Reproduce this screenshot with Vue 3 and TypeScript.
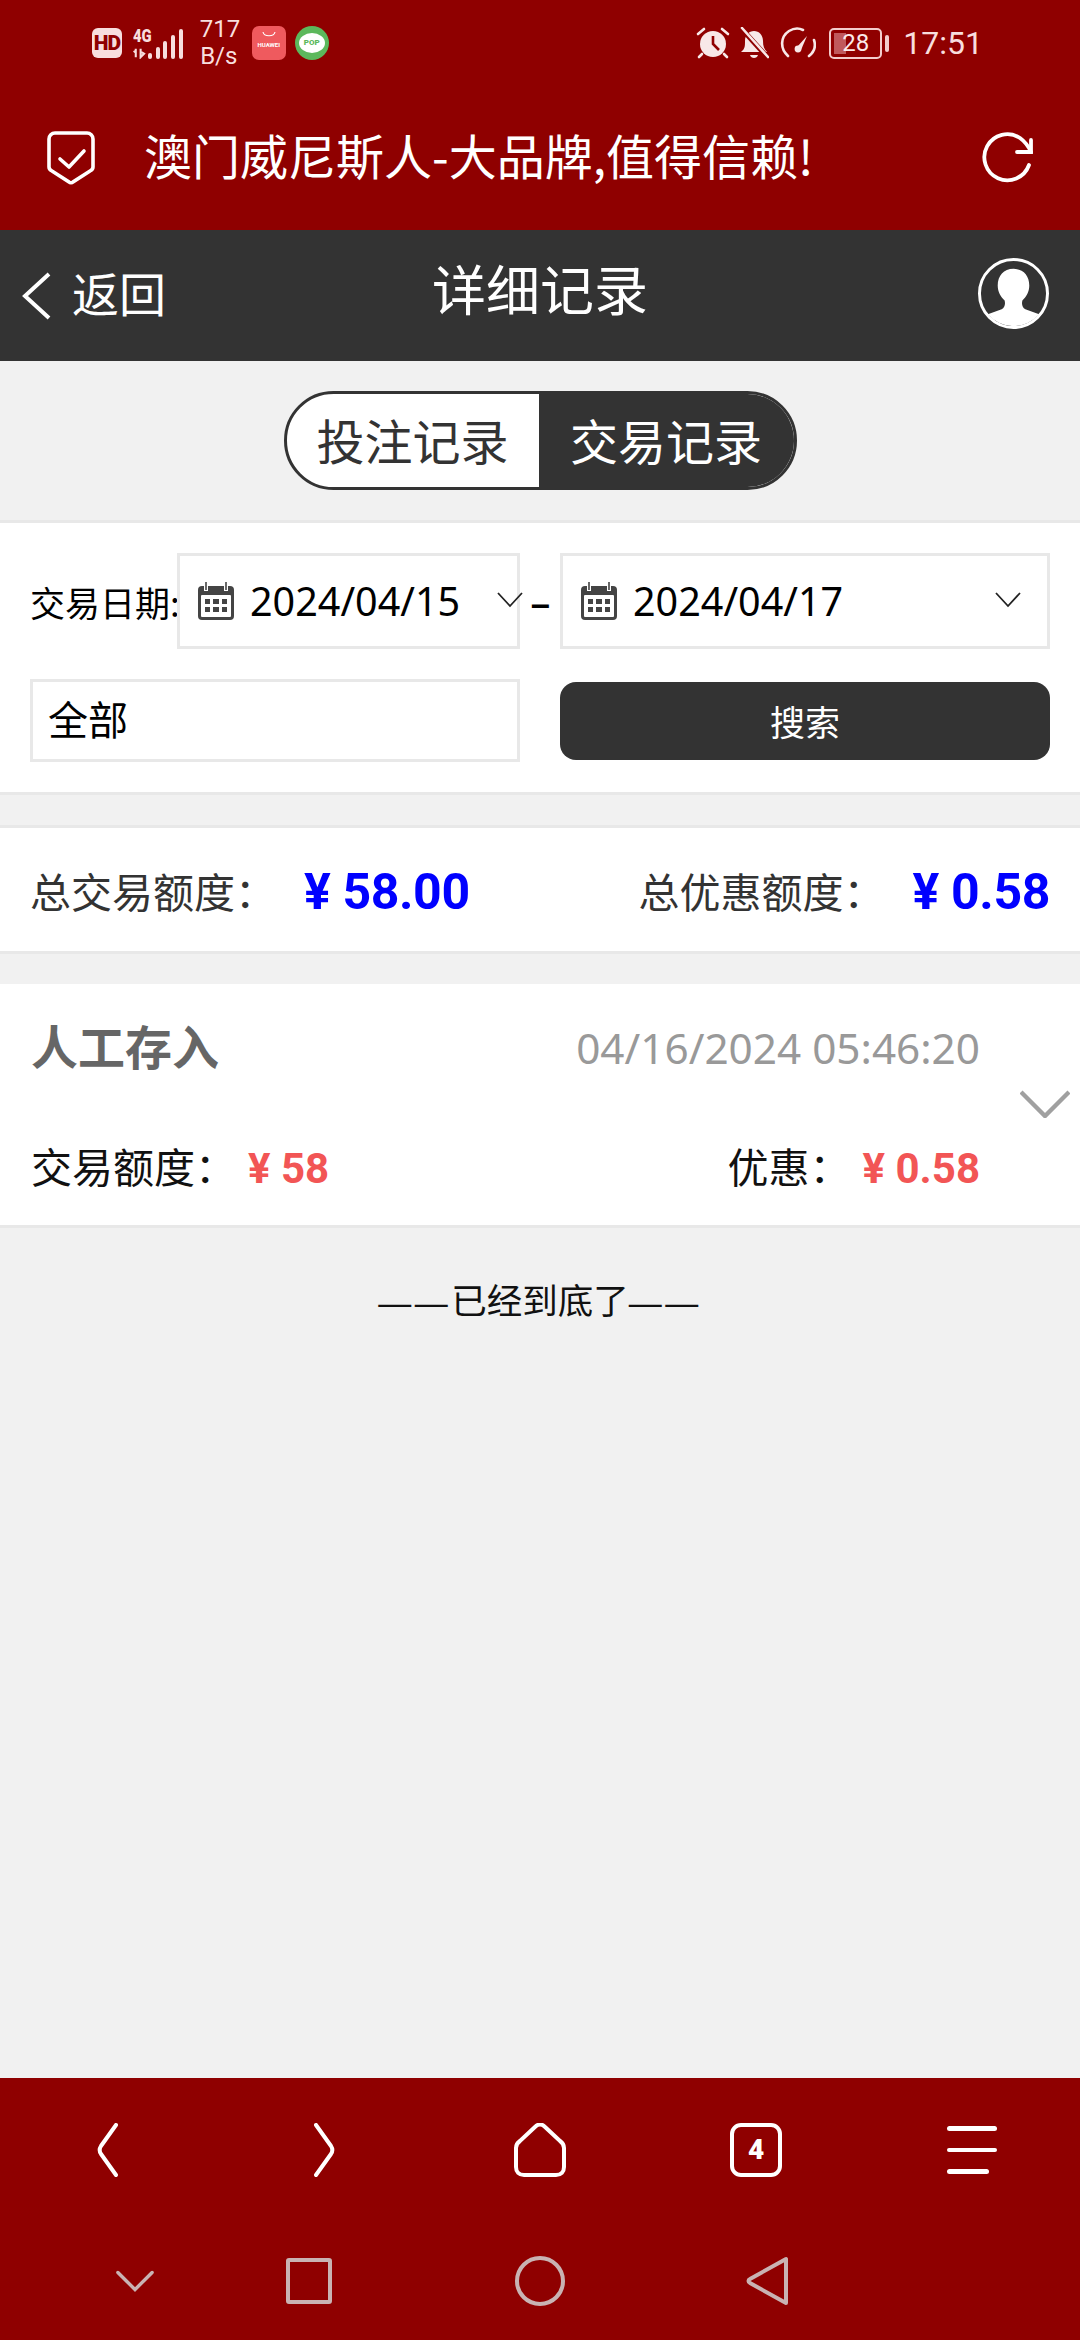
<template>
  <div class="page">
    <div class="top-red">
      <div class="status">
        <div class="status-left">
          <span class="hd">HD</span>
          <div class="net">
            <div class="net-text">
              <span>4G</span>
              <svg width="18" height="12" viewBox="0 0 26 14"><path d="M3 4 1 6M4 1v12M11 1v12l5-5-5-3" fill="none" stroke="#f8dede" stroke-width="3" /></svg>
            </div>
            <div class="bars">
              <i v-for="h in signal" :key="h" class="bar" :style="{ height: h + 'px' }" />
            </div>
          </div>
          <div class="speed">717<br />B/s</div>
          <div class="app-huawei">
            <svg width="14" height="7" viewBox="0 0 14 7"><path d="M1 1c1 5 11 5 12 0" fill="none" stroke="#fff" stroke-width="1.2" /></svg>
            <span>HUAWEI</span>
          </div>
          <div class="app-pop"><span>POP</span></div>
        </div>
        <div class="status-right">
          <svg width="34" height="32" viewBox="0 0 34 32">
            <circle cx="17" cy="17" r="13" fill="#f8e8e8" />
            <path d="M17 9v8l6 6" fill="none" stroke="#8f0000" stroke-width="2.6" />
            <path d="M2 7l6-5M32 7l-6-5M6 27l-3 3M28 27l3 3" stroke="#f8e8e8" stroke-width="2.6" stroke-linecap="round" />
          </svg>
          <svg class="bell" width="30" height="32" viewBox="0 0 30 32">
            <path d="M2 25c4-3 4-6 4-11 0-6 4-10 9-10s9 4 9 10c0 5 1 8 4 11z" fill="#f8e8e8" />
            <path d="M11 28h8c-1 4-7 4-8 0z" fill="#f8e8e8" />
            <path d="M2 1l27 30" stroke="#8f0000" stroke-width="5" />
            <path d="M3 1l26 29" stroke="#f8e8e8" stroke-width="2.6" stroke-linecap="round" />
          </svg>
          <svg class="gauge" width="36" height="32" viewBox="0 0 36 32">
            <path d="M8 29C0 22 0 10 9 4c5-3 10-3 14-1" fill="none" stroke="#f8e8e8" stroke-width="2.6" stroke-linecap="round" />
            <path d="M29 29c5-4 7-10 5-16" fill="none" stroke="#f8e8e8" stroke-width="2.6" stroke-linecap="round" />
            <path d="M17 20l10-11-6 14z" fill="#f8e8e8" />
            <circle cx="18" cy="22" r="3.4" fill="#f8e8e8" />
          </svg>
          <div class="battery">
            <div class="battery-box">
              <i class="battery-fill" />
              <span>28</span>
            </div>
            <i class="battery-cap" />
          </div>
          <span class="time">17:51</span>
        </div>
      </div>
      <div class="app-bar">
        <svg class="shield" width="50" height="56" viewBox="0 0 50 56">
          <path d="M9 3h32a6 6 0 0 1 6 6v28c0 2-1 3-3 4L27 52c-1 1-3 1-4 0L6 41c-2-1-3-2-3-4V9a6 6 0 0 1 6-6z" fill="none" stroke="#fff" stroke-width="3.6" />
          <path d="M14 29l9 8 15-16" fill="none" stroke="#fff" stroke-width="3.6" stroke-linecap="round" stroke-linejoin="round" />
        </svg>
        <span class="app-title">澳门威尼斯人-大品牌,值得信赖!</span>
        <svg class="reload" width="52" height="52" viewBox="0 0 52 52">
          <path d="M47 33A23 23 0 1 1 38 6q7 5 11 14" fill="none" stroke="#fff" stroke-width="3.8" stroke-linecap="round" />
          <path d="M35 20h14V8" fill="none" stroke="#fff" stroke-width="3.8" stroke-linecap="round" />
        </svg>
      </div>
    </div>

    <header class="nav">
      <div class="nav-back">
        <svg width="30" height="48" viewBox="0 0 30 48"><path d="M28 2 4 24l24 22" fill="none" stroke="#fff" stroke-width="4" /></svg>
        <span>返回</span>
      </div>
      <h1 class="nav-title">详细记录</h1>
      <svg class="nav-user" width="71" height="71" viewBox="0 0 72 72">
        <circle cx="36" cy="36" r="34.5" fill="#333" stroke="#fff" stroke-width="3" />
        <path d="M36 11c10 0 16 7 16 17 0 6-3 12-7 15-1 4 0 7 3 9l14 5a34 34 0 0 1-52 0l14-5c3-2 4-5 3-9-4-3-7-9-7-15 0-10 6-17 16-17z" fill="#fff" />
      </svg>
    </header>

    <div class="tabs-wrap">
      <div class="tabs">
        <div class="tab">投注记录</div>
        <div class="tab active">交易记录</div>
      </div>
    </div>

    <section class="filter">
      <div class="filter-row">
        <span class="date-label">交易日期:</span>
        <div class="date-box first">
          <svg class="cal" width="38" height="38" viewBox="0 0 38 38">
            <path d="M5 4h28a4 4 0 0 1 4 4v26a4 4 0 0 1-4 4H5a4 4 0 0 1-4-4V8a4 4 0 0 1 4-4z" fill="#444" />
            <rect x="4" y="13" width="30" height="22" rx="1" fill="#fff" />
            <path d="M9 1v8M29 1v8" stroke="#fff" stroke-width="4" />
            <path d="M9 0v8M29 0v8" stroke="#444" stroke-width="1.6" />
            <path d="M8 17h5v5H8zM16 17h6v5h-6zM25 17h5v5h-5zM8 25h5v5H8zM16 25h6v5h-6zM25 25h5v5h-5z" fill="#444" />
          </svg>
          <span class="date-val">2024/04/15</span>
          <svg class="caret" width="26" height="16" viewBox="0 0 26 16"><path d="M1 1l12 13L25 1" fill="none" stroke="#222" stroke-width="1.8" /></svg>
        </div>
        <span class="dash">–</span>
        <div class="date-box">
          <svg class="cal" width="38" height="38" viewBox="0 0 38 38">
            <path d="M5 4h28a4 4 0 0 1 4 4v26a4 4 0 0 1-4 4H5a4 4 0 0 1-4-4V8a4 4 0 0 1 4-4z" fill="#444" />
            <rect x="4" y="13" width="30" height="22" rx="1" fill="#fff" />
            <path d="M9 1v8M29 1v8" stroke="#fff" stroke-width="4" />
            <path d="M9 0v8M29 0v8" stroke="#444" stroke-width="1.6" />
            <path d="M8 17h5v5H8zM16 17h6v5h-6zM25 17h5v5h-5zM8 25h5v5H8zM16 25h6v5h-6zM25 25h5v5h-5z" fill="#444" />
          </svg>
          <span class="date-val">2024/04/17</span>
          <svg class="caret" width="26" height="16" viewBox="0 0 26 16"><path d="M1 1l12 13L25 1" fill="none" stroke="#222" stroke-width="1.8" /></svg>
        </div>
      </div>
      <div class="filter-row second">
        <div class="select-box">全部</div>
        <button class="search">搜索</button>
      </div>
    </section>

    <section class="summary">
      <div class="sum-item">
        <span class="sum-label">总交易额度：</span>
        <span class="sum-val">¥ 58.00</span>
      </div>
      <div class="sum-item">
        <span class="sum-label">总优惠额度：</span>
        <span class="sum-val">¥ 0.58</span>
      </div>
    </section>

    <section class="record">
      <div class="rec-top">
        <span class="rec-name">人工存入</span>
        <span class="rec-time">04/16/2024 05:46:20</span>
      </div>
      <div class="rec-bottom">
        <div class="rec-cell">
          <span class="rec-label">交易额度：</span>
          <span class="rec-val">¥ 58</span>
        </div>
        <div class="rec-cell">
          <span class="rec-label">优惠：</span>
          <span class="rec-val">¥ 0.58</span>
        </div>
      </div>
      <svg class="rec-arrow" width="50" height="28" viewBox="0 0 50 28"><path d="M1 2l24 24L49 2" fill="none" stroke="#a0a0a0" stroke-width="4.4" /></svg>
    </section>

    <p class="end"><span class="dashes">——</span>已经到底了<span class="dashes">——</span></p>

    <footer class="bottom">
      <div class="browser-bar">
        <svg width="30" height="54" viewBox="0 0 30 54"><path d="M23 2 8 23c-2 3-2 5 0 8l15 21" fill="none" stroke="#fff" stroke-width="4" stroke-linecap="round" /></svg>
        <svg width="30" height="54" viewBox="0 0 30 54"><path d="M7 2l15 21c2 3 2 5 0 8L7 52" fill="none" stroke="#fff" stroke-width="4" stroke-linecap="round" /></svg>
        <svg width="54" height="54" viewBox="0 0 54 54"><path d="M23 3c2-2 6-2 8 0l16 15c3 2 4 4 4 7v19c0 5-3 8-8 8H11c-5 0-8-3-8-8V25c0-3 1-5 4-7z" fill="none" stroke="#fff" stroke-width="4" /></svg>
        <div class="tab-count">4</div>
        <div class="menu-lines"><i /><i /><i class="short" /></div>
      </div>
      <div class="sys-bar">
        <svg class="sys-down" width="38" height="24" viewBox="0 0 40 24"><path d="M2 3l18 18L38 3" fill="none" stroke="#c9b3b3" stroke-width="3.6" stroke-linecap="round" /></svg>
        <div class="sys-square" />
        <div class="sys-circle" />
        <svg class="sys-back" width="44" height="50" viewBox="0 0 44 50"><path d="M40 3v44L4 27c-2-1-2-3 0-4z" fill="none" stroke="#c9b3b3" stroke-width="4" stroke-linejoin="round" /></svg>
      </div>
    </footer>
  </div>
</template>

<script setup lang="ts">
const signal: number[] = [6, 12, 18, 24, 30]
</script>

<style>
html,
body {
  margin: 0;
  background: #f1f1f1;
}
</style>

<style scoped>
* {
  box-sizing: border-box;
}
.page {
  width: 1080px;
  height: 2340px;
  display: flex;
  flex-direction: column;
  background: #f1f1f1;
  font-family: "Noto Sans CJK SC", "Noto Sans", sans-serif;
  overflow: hidden;
}
.top-red {
  height: 230px;
  background: #8f0000;
  flex-shrink: 0;
}
.status {
  height: 82px;
  padding: 20px 92px 0;
  display: flex;
  justify-content: space-between;
  align-items: flex-start;
  color: #f8dede;
  font-family: Roboto, sans-serif;
}
.status-left,
.status-right {
  display: flex;
  align-items: center;
  height: 46px;
}
.hd {
  width: 30px;
  height: 30px;
  background: #f8dede;
  color: #8f0000;
  border-radius: 6px;
  font-size: 21px;
  font-weight: 900;
  line-height: 30px;
  text-align: center;
  letter-spacing: -1px;
}
.net {
  display: flex;
  align-items: flex-end;
  margin-left: 11px;
  height: 31px;
}
.net-text {
  display: flex;
  flex-direction: column;
  width: 15px;
  font-size: 19px;
  line-height: 18px;
  font-weight: 900;
}
.net-text span {
  display: block;
  transform: scaleX(0.78);
  transform-origin: left center;
}
.net-text svg {
  display: block;
  margin-top: 2px;
}
.bars {
  display: flex;
  align-items: flex-end;
  gap: 3.7px;
}
.bar {
  display: block;
  width: 4px;
  background: #f8dede;
  border-radius: 2px;
}
.speed {
  margin-left: 17px;
  width: 38px;
  font-size: 24px;
  line-height: 27px;
  text-align: center;
  white-space: nowrap;
}
.app-huawei {
  margin-left: 14px;
  width: 34px;
  height: 34px;
  border-radius: 7px;
  background: #ef5a5e;
  display: flex;
  flex-direction: column;
  align-items: center;
  color: #fff;
}
.app-huawei svg {
  margin-top: 5px;
}
.app-huawei span {
  font-size: 6px;
  line-height: 9px;
  font-weight: 700;
  margin-top: 2px;
}
.app-pop {
  margin-left: 9px;
  width: 34px;
  height: 34px;
  border-radius: 50%;
  background: #5cb85c;
  display: flex;
  align-items: center;
  justify-content: center;
}
.app-pop span {
  width: 26px;
  height: 20px;
  border-radius: 50%;
  background: #fff;
  color: #5cb85c;
  font-size: 8px;
  line-height: 20px;
  font-weight: 900;
  text-align: center;
}
.status-right {
  margin-right: 5px;
}
.bell {
  margin-left: 9px;
}
.gauge {
  margin-left: 11px;
}
.battery {
  margin-left: 13px;
  display: flex;
  align-items: center;
  gap: 3px;
}
.battery-box {
  position: relative;
  width: 53px;
  height: 31px;
  border: 2.5px solid #f3cdcd;
  border-radius: 5px;
  display: flex;
  align-items: center;
  justify-content: center;
}
.battery-fill {
  position: absolute;
  left: 3px;
  top: 3px;
  bottom: 3px;
  width: 12px;
  background: #c0595c;
}
.battery-box span {
  position: relative;
  font-size: 24px;
  color: #fbeaea;
}
.battery-cap {
  width: 4px;
  height: 17px;
  background: #f3cdcd;
  border-radius: 2px;
}
.time {
  margin-left: 14px;
  font-size: 32px;
}
.app-bar {
  height: 148px;
  padding: 4px 46px 0 46px;
  display: flex;
  align-items: center;
  color: #fff;
}
.app-title {
  margin: -8px 0 0 48px;
  font-size: 48px;
  flex: 1;
  white-space: nowrap;
}
.nav {
  position: relative;
  height: 131px;
  flex-shrink: 0;
  background: #333;
  color: #fff;
  display: flex;
  align-items: center;
  justify-content: space-between;
  padding: 0 31px 4px 21px;
}
.nav-back {
  display: flex;
  align-items: center;
  gap: 21px;
  font-size: 47px;
}
.nav-back svg {
  margin-top: 4px;
}
.nav-back span {
  margin-top: -4px;
}
.nav-title {
  position: absolute;
  left: 0;
  right: 0;
  margin: -12px 0 0;
  text-align: center;
  font-size: 54px;
  font-weight: 400;
}
.tabs-wrap {
  height: 162px;
  flex-shrink: 0;
  display: flex;
  align-items: center;
  justify-content: center;
  border-bottom: 3px solid #e8e8e8;
}
.tabs {
  width: 513px;
  height: 99px;
  border: 3px solid #333;
  border-radius: 50px;
  display: flex;
  overflow: hidden;
  background: #fff;
}
.tab {
  flex: 0 0 auto;
  width: 252px;
  font-size: 48px;
  line-height: 90px;
  text-align: center;
  color: #333;
}
.tab.active {
  flex: 1;
  background: #333;
  color: #fff;
}
.filter {
  height: 272px;
  flex-shrink: 0;
  background: #fff;
  border-bottom: 3px solid #e8e8e8;
  padding: 30px 30px 0;
}
.filter-row {
  display: flex;
  align-items: center;
  color: #000;
}
.filter-row.second {
  margin-top: 30px;
}
.date-label {
  width: 147px;
  font-size: 35px;
  white-space: nowrap;
}
.date-box {
  position: relative;
  flex: 1;
  height: 96px;
  border: 3px solid #e8e8e8;
  display: flex;
  align-items: center;
  padding-left: 17px;
  font-family: "Noto Sans", sans-serif;
}
.date-box.first {
  flex: 0 0 343px;
  background: #fff;
}
.date-val {
  margin-left: 15px;
  font-size: 39.5px;
  white-space: nowrap;
}
.caret {
  position: absolute;
  right: 26px;
  top: 36px;
}
.date-box.first .caret {
  right: -6px;
}
.dash {
  width: 40px;
  padding-left: 10px;
  font-size: 38px;
  font-weight: 700;
  line-height: 1;
}
.select-box {
  width: 490px;
  height: 83px;
  border: 3px solid #e8e8e8;
  padding-left: 15px;
  font-size: 40px;
  line-height: 72px;
}
.search {
  margin-left: 40px;
  width: 490px;
  height: 78px;
  border: 0;
  border-radius: 16px;
  background: #333;
  color: #fff;
  font: inherit;
  font-size: 35px;
}
.summary {
  margin-top: 30px;
  height: 129px;
  flex-shrink: 0;
  background: #fff;
  border-top: 3px solid #e8e8e8;
  border-bottom: 3px solid #e8e8e8;
  padding: 0 30px 0 30px;
  display: flex;
  justify-content: space-between;
  align-items: center;
}
.sum-item {
  display: flex;
  align-items: center;
}
.sum-label {
  font-size: 41px;
  color: #333;
}
.sum-val {
  margin: 4px 0 0 28px;
  font-family: Roboto, "Noto Sans", sans-serif;
  font-size: 50px;
  font-weight: 700;
  letter-spacing: -0.4px;
  color: #0000ff;
}
.record {
  position: relative;
  margin-top: 30px;
  height: 244px;
  flex-shrink: 0;
  background: #fff;
  border-bottom: 3px solid #e8e8e8;
  padding: 0 100px 0 31px;
}
.rec-top {
  display: flex;
  justify-content: space-between;
  align-items: center;
  height: 126px;
}
.rec-name {
  margin-top: -6px;
  font-size: 47px;
  font-weight: 700;
  color: #666;
}
.rec-time {
  font-family: "Noto Sans", sans-serif;
  font-size: 42.3px;
  color: #999;
}
.rec-bottom {
  display: flex;
  justify-content: space-between;
  align-items: center;
  height: 66px;
  margin-top: 25px;
}
.rec-cell {
  display: flex;
  align-items: center;
}
.rec-label {
  margin-top: -6px;
  font-size: 41px;
  color: #111;
}
.rec-val {
  margin-left: 12px;
  font-family: Roboto, "Noto Sans", sans-serif;
  font-size: 42px;
  font-weight: 700;
  color: #f25555;
}
.rec-arrow {
  position: absolute;
  right: 10px;
  top: 106px;
}
.end {
  margin: 41px 0 0;
  text-align: center;
  font-size: 35.5px;
  line-height: 60px;
  color: #111;
}
.dashes {
  font-family: "Liberation Sans", sans-serif;
  font-size: 33px;
  letter-spacing: 3.5px;
}
.bottom {
  margin-top: auto;
  height: 262px;
  flex-shrink: 0;
  background: #8f0000;
}
.browser-bar {
  height: 144px;
  display: grid;
  grid-template-columns: repeat(5, 216px);
  justify-items: center;
  align-items: center;
}
.tab-count {
  width: 52px;
  height: 54px;
  border: 4px solid #fff;
  border-radius: 11px;
  color: #fff;
  font-family: Roboto, sans-serif;
  font-size: 28px;
  font-weight: 900;
  line-height: 46px;
  text-align: center;
}
.menu-lines {
  width: 50px;
  display: flex;
  flex-direction: column;
  gap: 17px;
}
.menu-lines i {
  height: 4.5px;
  background: #fff;
  border-radius: 3px;
}
.menu-lines i.short {
  width: 42px;
}
.sys-bar {
  height: 118px;
  display: flex;
  align-items: center;
  padding-left: 116px;
}
.sys-square {
  margin-left: 132px;
  width: 46px;
  height: 46px;
  border: 4px solid #c9b3b3;
  border-radius: 3px;
}
.sys-circle {
  margin-left: 183px;
  width: 50px;
  height: 50px;
  border: 4px solid #c9b3b3;
  border-radius: 50%;
}
.sys-back {
  margin-left: 181px;
}
</style>
